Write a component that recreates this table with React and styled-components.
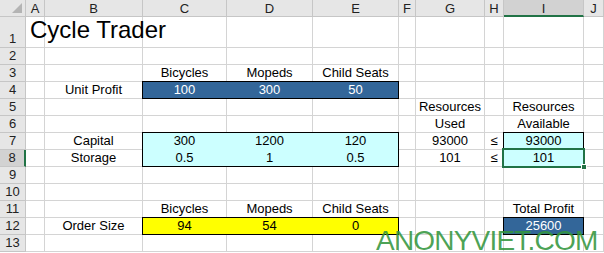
import React from "react";
import styled, { createGlobalStyle } from "styled-components";

const GlobalStyle = createGlobalStyle`
  html, body {
    margin: 0;
    padding: 0;
    background: #fff;
  }
  * {
    box-sizing: border-box;
  }
`;

const colWidths = [26, 19, 98, 84, 86, 86, 17, 69, 19, 80, 20];
const colNames = ["A", "B", "C", "D", "E", "F", "G", "H", "I", "J"];
const rowHeights = [17, 31, 17, 17, 17, 17, 17, 17, 17, 17, 17, 17, 17, 17];
const rows = Array.from({ length: 13 }, (_, i) => i + 1);

const BLUE = "#336699";
const CYAN = "#ccffff";
const YELLOW = "#ffff00";

const cells = {
  A1: { v: "Cycle Trader", big: true },
  C3: { v: "Bicycles" },
  D3: { v: "Mopeds" },
  E3: { v: "Child Seats" },
  B4: { v: "Unit Profit" },
  C4: { v: "100", fill: BLUE, light: true },
  D4: { v: "300", fill: BLUE, light: true },
  E4: { v: "50", fill: BLUE, light: true },
  G5: { v: "Resources" },
  I5: { v: "Resources" },
  G6: { v: "Used" },
  I6: { v: "Available" },
  B7: { v: "Capital" },
  C7: { v: "300", fill: CYAN },
  D7: { v: "1200", fill: CYAN },
  E7: { v: "120", fill: CYAN },
  G7: { v: "93000" },
  H7: { v: "≤" },
  I7: { v: "93000", fill: CYAN },
  B8: { v: "Storage" },
  C8: { v: "0.5", fill: CYAN },
  D8: { v: "1", fill: CYAN },
  E8: { v: "0.5", fill: CYAN },
  G8: { v: "101" },
  H8: { v: "≤" },
  I8: { v: "101", fill: CYAN },
  C11: { v: "Bicycles" },
  D11: { v: "Mopeds" },
  E11: { v: "Child Seats" },
  I11: { v: "Total Profit" },
  B12: { v: "Order Size" },
  C12: { v: "94", fill: YELLOW },
  D12: { v: "54", fill: YELLOW },
  E12: { v: "0", fill: YELLOW },
  I12: { v: "25600", fill: BLUE, light: true },
};

// grid lines: column 1 is the row header, so A = 2, C = 4, I = 10
const ranges = [
  { col: "4 / 7", row: "5 / 6" },
  { col: "4 / 7", row: "8 / 10" },
  { col: "10 / 11", row: "8 / 9" },
  { col: "4 / 7", row: "13 / 14" },
  { col: "10 / 11", row: "13 / 14" },
];

const Page = styled.div`
  position: relative;
  width: 604px;
  height: 253px;
  overflow: hidden;
  font-family: "Liberation Sans", Arial, sans-serif;
  font-size: 13px;
  color: #000;
`;

const Sheet = styled.div`
  display: grid;
  grid-template-columns: ${colWidths.map((w) => w + "px").join(" ")};
  grid-template-rows: ${rowHeights.map((h) => h + "px").join(" ")};
`;

const Corner = styled.div`
  grid-row: 1;
  grid-column: 1;
  position: relative;
  background: #e6e6e6;
  border-right: 1px solid #c6c6c6;
  border-bottom: 1px solid #c6c6c6;

  svg {
    position: absolute;
    right: 3px;
    bottom: 3px;
  }
`;

const ColHeader = styled.div`
  grid-row: 1;
  grid-column: ${(p) => p.$col};
  display: flex;
  align-items: center;
  justify-content: center;
  background: ${(p) => (p.$active ? "#d2d2d2" : "#e6e6e6")};
  border-right: 1px solid #c6c6c6;
  border-bottom: ${(p) => (p.$active ? "2px solid #217346" : "1px solid #c6c6c6")};
  color: #222;
  font-size: 13px;
  padding-top: ${(p) => (p.$active ? "1px" : "0")};
`;

const RowHeader = styled.div`
  grid-row: ${(p) => p.$row};
  grid-column: 1;
  display: flex;
  align-items: flex-end;
  justify-content: center;
  padding-bottom: 1px;
  background: ${(p) => (p.$active ? "#d2d2d2" : "#e6e6e6")};
  border-right: ${(p) => (p.$active ? "2px solid #217346" : "1px solid #c6c6c6")};
  border-bottom: 1px solid #c6c6c6;
  color: #222;
  font-size: 13px;
  line-height: 15px;
`;

const Cell = styled.div`
  grid-row: ${(p) => p.$row};
  grid-column: ${(p) => p.$col};
  display: flex;
  align-items: flex-end;
  justify-content: ${(p) => (p.$big ? "flex-start" : "center")};
  white-space: nowrap;
  overflow: visible;
  background: ${(p) => p.$fill || "#fff"};
  color: ${(p) => (p.$light ? "#fff" : "#000")};
  border-right: 1px solid ${(p) => (p.$fill ? p.$fill : "#d4d4d4")};
  border-bottom: 1px solid ${(p) => (p.$fill ? p.$fill : "#d4d4d4")};
  font-size: ${(p) => (p.$big ? "24px" : "13px")};
  line-height: ${(p) => (p.$big ? "28px" : "15px")};
  padding: ${(p) => (p.$big ? "0 0 3px 4px" : "0 2px 1px")};
  z-index: ${(p) => (p.$big ? 2 : 1)};
`;

const RangeBox = styled.div`
  grid-row: ${(p) => p.$row};
  grid-column: ${(p) => p.$col};
  margin: -1px 0 0 -1px;
  border: 1px solid #000;
  pointer-events: none;
  z-index: 3;
`;

const Selection = styled.div`
  grid-row: 9 / 10;
  grid-column: 10 / 11;
  position: relative;
  margin: -2px -1px -1px -2px;
  border: 2px solid #217346;
  z-index: 4;
`;

const Handle = styled.span`
  position: absolute;
  right: -4px;
  bottom: -4px;
  width: 6px;
  height: 6px;
  background: #217346;
  border: 1px solid #fff;
`;

const Watermark = styled.div`
  position: absolute;
  left: 376px;
  top: 226px;
  font-family: "Liberation Sans", Arial, sans-serif;
  font-size: 28px;
  letter-spacing: -0.8px;
  line-height: 30px;
  color: rgba(52, 150, 62, 0.88);
  white-space: nowrap;
  z-index: 10;
`;

export default function App() {
  return (
    <>
      <GlobalStyle />
      <Page>
        <Sheet>
          <Corner>
            <svg width="10" height="10" viewBox="0 0 10 10">
              <polygon points="10,0 10,10 0,10" fill="#b4b4b4" />
            </svg>
          </Corner>
          {colNames.map((name, i) => (
            <ColHeader key={name} $col={i + 2} $active={name === "I"}>
              {name}
            </ColHeader>
          ))}
          {rows.map((r) => (
            <RowHeader key={r} $row={r + 1} $active={r === 8}>
              {r}
            </RowHeader>
          ))}
          {rows.map((r) =>
            colNames.map((name, i) => {
              const c = cells[name + r] || {};
              return (
                <Cell
                  key={name + r}
                  $row={r + 1}
                  $col={i + 2}
                  $fill={c.fill}
                  $light={c.light}
                  $big={c.big}
                >
                  {c.v}
                </Cell>
              );
            })
          )}
          {ranges.map((rg, i) => (
            <RangeBox key={i} $row={rg.row} $col={rg.col} />
          ))}
          <Selection>
            <Handle />
          </Selection>
        </Sheet>
        <Watermark>ANONYVIET.COM</Watermark>
      </Page>
    </>
  );
}
